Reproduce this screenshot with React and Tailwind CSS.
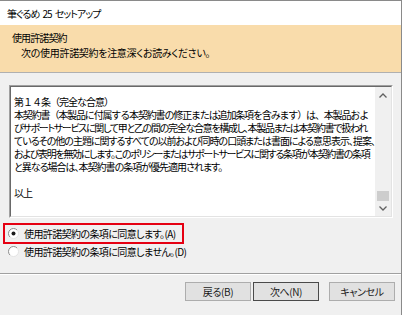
import React from 'react';

const font = "font-['Noto_Sans_CJK_JP','Noto_Sans',sans-serif] text-[10px] [font-feature-settings:'palt']";

const LINES = [
  { t: '第１４条（完全な合意）', c: 'tracking-[-1px] [font-feature-settings:normal]' },
  { t: '本契約書（本製品に付属する本契約書の修正または追加条項を含みます）は、本製品およ', c: 'tracking-[-1.15px] [font-feature-settings:normal]' },
  { t: 'びサポートサービスに関して甲と乙の間の完全な合意を構成し、本製品または本契約書で扱われ', c: 'tracking-[-1.3px]' },
  { t: 'ているその他の主題に関するすべての以前および同時の口頭または書面による意思表示、提案、', c: 'tracking-[-1px]' },
  { t: 'および表明を無効にします。このポリシーまたはサポートサービスに関する条項が本契約書の条項', c: 'tracking-[-1.3px]' },
  { t: 'と異なる場合は、本契約書の条項が優先適用されます。', c: 'tracking-[-1px]' },
  { t: '', c: '' },
  { t: '以上', c: 'tracking-[-1px]' },
];

function Radio({ checked }) {
  return (
    <svg width="11" height="11" viewBox="0 0 11 11" className="shrink-0">
      <circle cx="5.5" cy="5.5" r="5" fill="#fff" />
      <path d="M1.96 9.04 A5 5 0 0 1 9.04 1.96" fill="none" stroke="#8c8c8c" strokeWidth="1" />
      <path d="M9.04 1.96 A5 5 0 0 1 1.96 9.04" fill="none" stroke="#e3e3e3" strokeWidth="1" />
      {checked && <circle cx="5.5" cy="5.5" r="2" fill="#1a1a1a" />}
    </svg>
  );
}

function Chevron({ up }) {
  return (
    <svg width="8" height="5" viewBox="0 0 8 5">
      <path d={up ? 'M0.5 4.5 L4 1 L7.5 4.5' : 'M0.5 0.5 L4 4 L7.5 0.5'} fill="none" stroke="#606060" strokeWidth="1.3" />
    </svg>
  );
}

function Btn({ children, focused }) {
  return (
    <button
      className={
        'h-[19px] w-[66px] flex items-center justify-center bg-[#e1e1e1] text-[#1a1a1a] tracking-[-0.4px] ' +
        (focused ? 'border border-[#4a4a4a]' : 'border border-[#adadad]')
      }
    >
      {children}
    </button>
  );
}

export default function App() {
  return (
    <div className={'w-[402px] h-[315px] bg-[#f0f0f0] border-t border-r border-[#8a8a8a] flex flex-col text-black ' + font}>
      <div className="h-[24px] shrink-0 bg-white flex items-center pl-[7px] tracking-[-1px] [word-spacing:2px]">
        筆ぐるめ 25 セットアップ
      </div>
      <div className="h-[48px] shrink-0 bg-[#f9dcab] border-b border-[#b0b0b0] pl-[12px] pt-[5px]">
        <div className="h-[15px] leading-[15px] tracking-[-0.9px]">使用許諾契約</div>
        <div className="h-[15px] leading-[15px] ml-[9px] tracking-[-0.3px]">次の使用許諾契約を注意深くお読みください。</div>
      </div>

      <div className="mt-[12px] ml-[9px] w-[384px] h-[133px] border-t border-l border-[#a0a0a0] border-b border-r border-b-white border-r-white">
        <div className="h-full border-t border-l border-[#696969] border-b border-r border-b-[#e3e3e3] border-r-[#e3e3e3] bg-white flex">
          <div className="flex-1 pl-[3px] pt-[8px] overflow-hidden">
            {LINES.map((l, i) => (
              <div key={i} className={'h-[13px] leading-[13px] whitespace-nowrap ' + l.c}>{l.t}</div>
            ))}
          </div>
          <div className="w-[16px] bg-[#f0f0f0] flex flex-col">
            <div className="h-[17px] flex items-center justify-center"><Chevron up /></div>
            <div className="flex-1 flex flex-col justify-end items-center">
              <div className="w-[12px] h-[10px] bg-[#cdcdcd]" />
            </div>
            <div className="h-[15px] flex items-center justify-center"><Chevron /></div>
          </div>
        </div>
      </div>

      <div className="ml-[3px] mt-[5px] tracking-[-0.6px]">
        <div className="w-[181px] h-[21px] border-2 border-[#e50012] flex items-center pl-[3px] gap-[5px]">
          <Radio checked />
          <span className="leading-[13px] whitespace-nowrap">使用許諾契約の条項に同意します。(A)</span>
        </div>
        <div className="h-[13px] flex items-center ml-[5px] gap-[5px] mt-[1px]">
          <Radio />
          <span className="leading-[13px] whitespace-nowrap">使用許諾契約の条項に同意しません。(D)</span>
        </div>
      </div>

      <div className="mt-[15px] border-t border-[#a0a0a0] border-b border-b-white" />

      <div className="mt-[7px] flex justify-end pr-[6px]">
        <Btn>戻る(B)</Btn>
        <div className="ml-[2px]"><Btn focused>次へ(N)</Btn></div>
        <div className="ml-[10px]"><Btn>キャンセル</Btn></div>
      </div>
    </div>
  );
}
